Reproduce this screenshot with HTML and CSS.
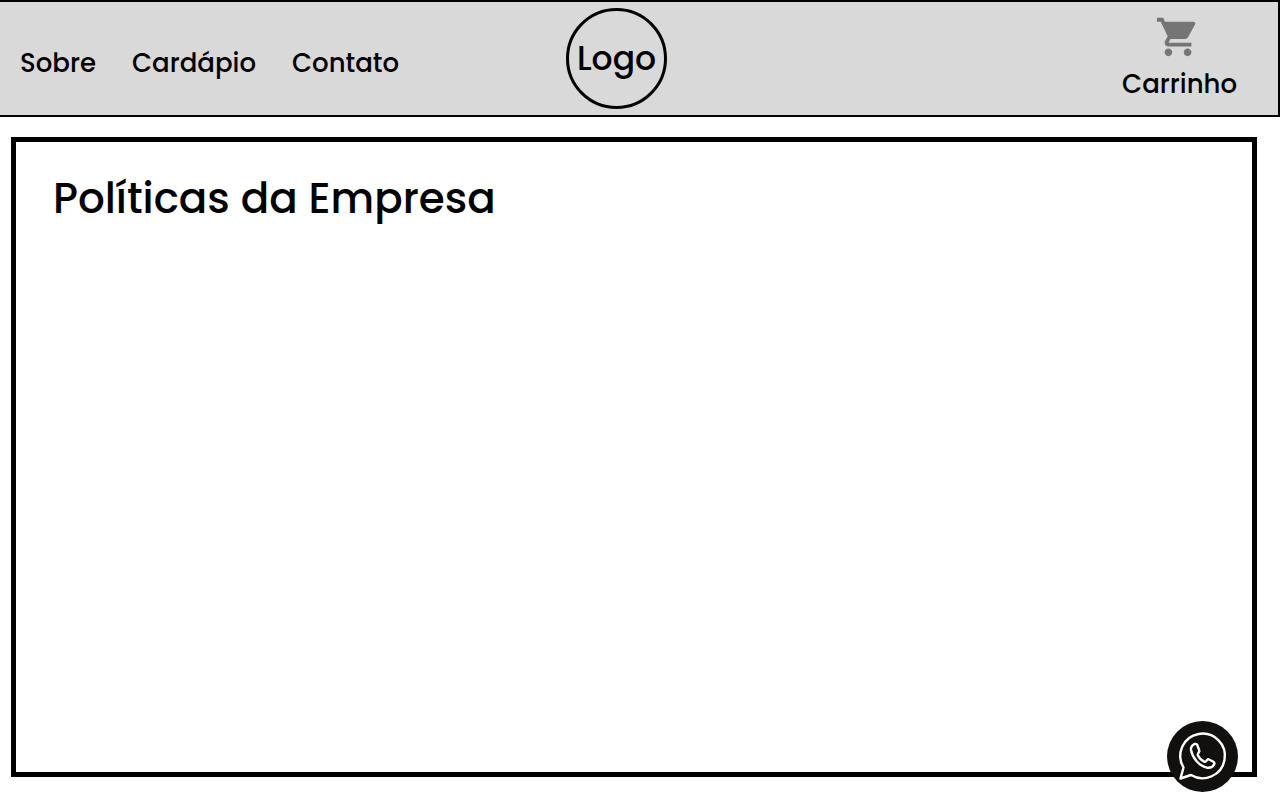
FILE: index.html
```html
<!DOCTYPE html>
<html lang="pt-BR">
<head>
<meta charset="utf-8">
<meta name="viewport" content="width=device-width, initial-scale=1">
<title>Políticas da Empresa</title>
<link rel="stylesheet" href="styles.css">
</head>
<body>
<header class="header">
  <nav class="nav">
    <a class="link" href="#sobre">Sobre</a>
    <a class="link" href="#cardapio">Cardápio</a>
    <a class="link" href="#contato">Contato</a>
  </nav>
  <a class="logo" href="#inicio">Logo</a>
  <a class="link cart" href="#carrinho">
    <svg class="cart-icon" viewBox="0 0 24 24" aria-hidden="true"><path d="M7 18c-1.1 0-1.99.9-1.99 2S5.900 22 7 22s2-.9 2-2-.9-2-2-2zM1 2v2h2l3.600 7.590-1.350 2.450c-.16.28-.25.61-.25.96 0 1.100.9 2 2 2h12v-2H7.420c-.14 0-.25-.11-.25-.25l.03-.12.9-1.630h7.450c.75 0 1.410-.41 1.750-1.030l3.580-6.490c.08-.14.12-.31.12-.48 0-.55-.45-1-1-1H5.210l-.94-2H1zm16 16c-1.100 0-1.990.9-1.990 2s.89 2 1.990 2 2-.9 2-2-.9-2-2-2z"/></svg>
    <span>Carrinho</span>
  </a>
</header>
<main class="panel">
  <h1 class="title">Políticas da Empresa</h1>
</main>
<a class="whatsapp" href="#whatsapp" aria-label="WhatsApp">
  <svg class="whatsapp-icon" viewBox="0 0 71 71" aria-hidden="true">
    <path d="M16.500 46.500A22.300 22.300 0 1 1 24 54L13.500 57.500Z"/>
    <path d="M27.500 23C25.500 24 23.700 26.500 24 29C25.500 37 32 45 40.500 46.800C43.500 47 46.500 45.500 47.500 42.500C47.700 41.500 47 41 46 40.500L42 38.500C41 38 40.500 38.500 40 39C39 40.500 38.500 41.300 37.500 40.800C34.500 39.500 32 36.800 30.700 34C30.500 33 31 32.500 32 31C32.500 30.500 32.500 30 32.200 29.300L30.300 24C30 23 29.500 22.500 27.500 23Z"/>
  </svg>
</a>
</body>
</html>
```
FILE: styles.css
```css
* {
  box-sizing: border-box;
}

body {
  display: flex;
  flex-direction: column;
  min-height: 100vh;
  margin: 0;
  background: #fff;
  color: #000;
  font-family: Poppins, Inter, sans-serif;
  font-weight: 500;
}

.header {
  display: grid;
  grid-template-columns: 1fr auto 1fr;
  align-items: center;
  padding: 6px 41px 6px 20px;
  border: 2px solid #000;
  border-left: 0;
  background: #d9d9d9;
}

.nav {
  display: flex;
  gap: 36px;
  padding-top: 8px;
}

.link {
  color: inherit;
  font-size: 26px;
  line-height: 32px;
  text-decoration: none;
}

.logo {
  display: flex;
  align-items: center;
  justify-content: center;
  width: 101px;
  height: 101px;
  margin-right: 24px;
  border: 3px solid #000;
  border-radius: 50%;
  color: inherit;
  font-size: 33px;
  text-decoration: none;
}

.cart {
  display: flex;
  flex-direction: column;
  align-items: center;
  gap: 8px;
  justify-self: end;
  padding-bottom: 4px;
}

.cart-icon {
  width: 46px;
  height: 46px;
  margin-right: 4px;
  fill: #757575;
}

.panel {
  flex: 1;
  margin: 20px 23px 23px 11px;
  padding: 29px 37px;
  border: 5px solid #000;
}

.title {
  margin: 0;
  font-size: 42px;
  font-weight: 500;
  line-height: 56px;
}

.whatsapp {
  position: fixed;
  right: 42px;
  bottom: 8px;
  width: 71px;
  height: 71px;
  border-radius: 50%;
  background: #11100e;
}

.whatsapp-icon {
  display: block;
  fill: none;
  stroke: #fff;
  stroke-width: 2.400;
  stroke-linejoin: round;
}
```
